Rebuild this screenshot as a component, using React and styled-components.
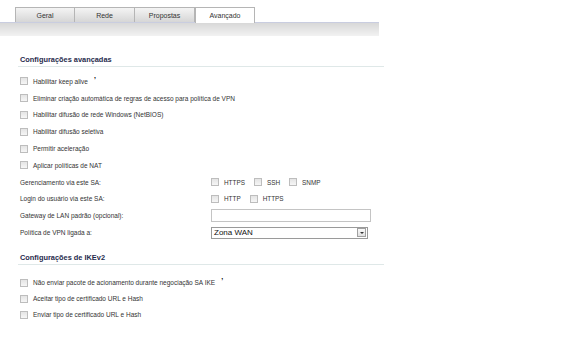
import React from 'react';
import styled, { createGlobalStyle } from 'styled-components';

const Global = createGlobalStyle`
    body {
        margin: 0;
        background: #fff;
        font-family: "Liberation Sans", Arial, sans-serif;
    }
`;

const Page = styled.div`
    width: 576px;
    height: 355px;
    background: #fff;
    overflow: hidden;
`;

const TabStrip = styled.div`
    display: flex;
    padding: 7px 0 0 15px;
    height: 15px;
`;

const Tab = styled.div`
    width: 60px;
    height: ${({ active }) => (active ? '16px' : '15px')};
    box-sizing: border-box;
    display: flex;
    align-items: center;
    justify-content: center;
    font-size: 7px;
    color: #333;
    border: 1px solid #b5b5b5;
    border-bottom: none;
    border-left: ${({ first, active }) => (first || active ? '1px solid #b5b5b5' : 'none')};
    background: ${({ active }) => (active ? '#fff' : 'linear-gradient(#f4f4f4, #d6d6d6)')};
    position: relative;
    z-index: ${({ active }) => (active ? 1 : 0)};
`;

const Bar = styled.div`
    width: 379px;
    height: 13px;
    border-top: 1px solid #c9cde0;
    background: linear-gradient(#d8d8d8, #f2f2f2);
`;

const Content = styled.div`
    padding: 19px 0 0 18px;
    width: 366px;
`;

const Section = styled.div`
    margin-bottom: ${({ gap }) => gap || 0}px;
`;

const Title = styled.div`
    font-weight: bold;
    font-size: 7.4px;
    color: #1f2b4c;
    padding: 0 0 2px 2px;
    border-bottom: 1px solid #dfe8e8;
    margin-bottom: ${({ space }) => space || 6}px;
`;

const Row = styled.div`
    display: flex;
    align-items: center;
    height: ${({ h }) => h || 16.8}px;
    padding-left: 2px;
    font-size: 6.5px;
    color: #333;
`;

const Box = styled.span`
    width: 8px;
    height: 8px;
    box-sizing: border-box;
    border: 1px solid #bdbdbd;
    background: linear-gradient(#e4e4e4, #f6f6f6);
    margin-right: ${({ gap }) => gap || 5}px;
    flex-shrink: 0;
`;

const Mark = styled.sup`
    font-size: 7px;
    font-weight: bold;
    margin-left: 6px;
    color: #000;
    position: relative;
    top: -2px;
`;

const Label = styled.div`
    width: 191px;
    flex-shrink: 0;
`;

const Options = styled.div`
    display: flex;
    align-items: center;
`;

const Option = styled.span`
    display: flex;
    align-items: center;
    font-size: 6.4px;
    margin-right: 9px;
`;

const TextInput = styled.div`
    width: 160px;
    height: 13px;
    box-sizing: border-box;
    border: 1px solid #c4c4c4;
    background: #fff;
`;

const Select = styled.div`
    width: 157px;
    height: 12px;
    box-sizing: border-box;
    border: 1px solid #9a9a9a;
    display: flex;
    align-items: center;
    justify-content: space-between;
    padding: 0 1px 0 2px;
    font-size: 8px;
    color: #111;
`;

const Arrow = styled.span`
    width: 9px;
    height: 9px;
    box-sizing: border-box;
    border: 1px solid #a0a0a0;
    background: linear-gradient(#fafafa, #e0e0e0);
    display: flex;
    align-items: center;
    justify-content: center;
    &::after {
        content: '';
        border-left: 2px solid transparent;
        border-right: 2px solid transparent;
        border-top: 2px solid #333;
    }
`;

const tabs = ['Geral', 'Rede', 'Propostas', 'Avançado'];

const advanced = [
    'Eliminar criação automática de regras de acesso para política de VPN',
    'Habilitar difusão de rede Windows (NetBIOS)',
    'Habilitar difusão seletiva',
    'Permitir aceleração',
    'Aplicar políticas de NAT',
];

const CheckRow = ({ children, mark, h }) => (
    <Row h={h}>
        <Box />
        {children}
        {mark && <Mark>ʼ</Mark>}
    </Row>
);

const App = () => {
    return (
        <Page>
            <Global />
            <TabStrip>
                {tabs.map((t, i) => (
                    <Tab key={t} first={i === 0} active={i === 3}>
                        {t}
                    </Tab>
                ))}
            </TabStrip>
            <Bar />
            <Content>
                <Section gap={12}>
                    <Title>Configurações avançadas</Title>
                    <CheckRow mark>Habilitar keep alive</CheckRow>
                    {advanced.map((a) => (
                        <CheckRow key={a}>{a}</CheckRow>
                    ))}
                    <Row>
                        <Label>Gerenciamento via este SA:</Label>
                        <Options>
                            <Option><Box />HTTPS</Option>
                            <Option><Box />SSH</Option>
                            <Option><Box />SNMP</Option>
                        </Options>
                    </Row>
                    <Row>
                        <Label>Login do usuário via este SA:</Label>
                        <Options>
                            <Option><Box />HTTP</Option>
                            <Option><Box />HTTPS</Option>
                        </Options>
                    </Row>
                    <Row>
                        <Label>Gateway de LAN padrão (opcional):</Label>
                        <TextInput />
                    </Row>
                    <Row>
                        <Label>Política de VPN ligada a:</Label>
                        <Select>
                            Zona WAN
                            <Arrow />
                        </Select>
                    </Row>
                </Section>
                <Section>
                    <Title space={10}>Configurações de IKEv2</Title>
                    <CheckRow mark h={16}>Não enviar pacote de acionamento durante negociação SA IKE</CheckRow>
                    <CheckRow h={16}>Aceitar tipo de certificado URL e Hash</CheckRow>
                    <CheckRow h={16}>Enviar tipo de certificado URL e Hash</CheckRow>
                </Section>
            </Content>
        </Page>
    );
};

export default App;
